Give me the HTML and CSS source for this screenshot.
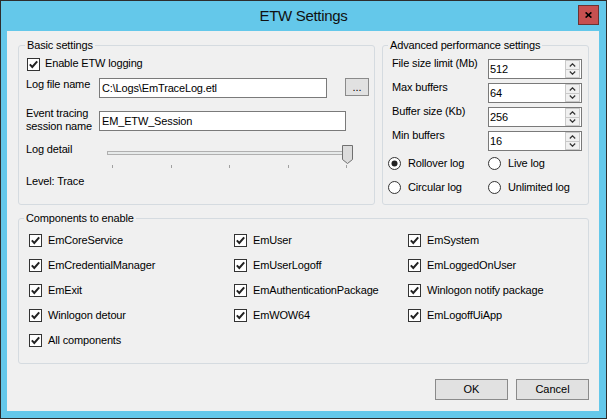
FILE: index.html
```html
<!DOCTYPE html>
<html>
<head>
<meta charset="utf-8">
<link rel="stylesheet" href="styles.css">
</head>
<body>
<svg class="defs" width="0" height="0" aria-hidden="true">
  <defs>
    <symbol id="chk" viewBox="0 0 13 13">
      <rect x="0.5" y="0.5" width="12" height="12" fill="#fff" stroke="#333"/>
      <path d="M2.8 6.4 L5.3 9 L10.2 3.4" fill="none" stroke="#222" stroke-width="2"/>
    </symbol>
    <symbol id="radio" viewBox="0 0 13 13">
      <circle cx="6.5" cy="6.5" r="6" fill="#fff" stroke="#333"/>
    </symbol>
    <symbol id="radio-on" viewBox="0 0 13 13">
      <circle cx="6.5" cy="6.5" r="6" fill="#fff" stroke="#333"/>
      <circle cx="6.5" cy="6.5" r="3" fill="#222"/>
    </symbol>
    <symbol id="up" viewBox="0 0 7 4">
      <path d="M0.8 3.5 L3.5 0.8 L6.2 3.5" fill="none" stroke="#333" stroke-width="1.2"/>
    </symbol>
    <symbol id="down" viewBox="0 0 7 4">
      <path d="M0.8 0.5 L3.5 3.2 L6.2 0.5" fill="none" stroke="#333" stroke-width="1.2"/>
    </symbol>
  </defs>
</svg>
<div class="window">
  <div class="titlebar">
    <span></span>
    <span class="title">ETW Settings</span>
    <button class="close" aria-label="Close">
      <svg width="7" height="6" viewBox="0 0 7 6"><path d="M0.6 0.4 L6.4 5.6 M6.4 0.4 L0.6 5.6" stroke="#000" stroke-width="1.6"/></svg>
    </button>
  </div>
  <div class="content">
    <div class="top-row">
      <section class="group basic">
        <span class="legend">Basic settings</span>
        <div class="check enable"><svg class="cb"><use href="#chk"/></svg><span>Enable ETW logging</span></div>
        <div class="field-row file">
          <span class="lbl">Log file name</span>
          <div class="textbox w228">C:\Logs\EmTraceLog.etl</div>
          <button class="btn-small">...</button>
        </div>
        <div class="field-row session">
          <span class="lbl">Event tracing<br>session name</span>
          <div class="textbox w247">EM_ETW_Session</div>
        </div>
        <div class="field-row detail">
          <span class="lbl">Log detail</span>
          <svg class="slider" width="258" height="26" viewBox="0 0 258 26">
            <rect x="8.5" y="8.5" width="243" height="3" fill="#e7eaea" stroke="#b0b0b0"/>
            <path d="M13.5 22 V25 M72.5 22 V25 M130.5 22 V25 M189.5 22 V25 M247.5 22 V25" stroke="#a0a0a0"/>
            <path d="M243.5 2.5 H253.5 V16.5 L248.5 20.5 L243.5 16.5 Z" fill="#dcdcdc" stroke="#707070"/>
          </svg>
        </div>
        <div class="level">Level: Trace</div>
      </section>
      <section class="group advanced">
        <span class="legend">Advanced performance settings</span>
        <div class="adv-row first"><span class="albl">File size limit (Mb)</span><div class="spin"><span class="val">512</span><span class="arrows"><span class="sb"><svg width="7" height="4"><use href="#up"/></svg></span><span class="sb"><svg width="7" height="4"><use href="#down"/></svg></span></span></div></div>
        <div class="adv-row"><span class="albl">Max buffers</span><div class="spin"><span class="val">64</span><span class="arrows"><span class="sb"><svg width="7" height="4"><use href="#up"/></svg></span><span class="sb"><svg width="7" height="4"><use href="#down"/></svg></span></span></div></div>
        <div class="adv-row"><span class="albl">Buffer size (Kb)</span><div class="spin"><span class="val">256</span><span class="arrows"><span class="sb"><svg width="7" height="4"><use href="#up"/></svg></span><span class="sb"><svg width="7" height="4"><use href="#down"/></svg></span></span></div></div>
        <div class="adv-row"><span class="albl">Min buffers</span><div class="spin"><span class="val">16</span><span class="arrows"><span class="sb"><svg width="7" height="4"><use href="#up"/></svg></span><span class="sb"><svg width="7" height="4"><use href="#down"/></svg></span></span></div></div>
        <div class="radios">
          <div class="radio"><svg class="rb"><use href="#radio-on"/></svg><span>Rollover log</span></div>
          <div class="radio"><svg class="rb"><use href="#radio"/></svg><span>Live log</span></div>
          <div class="radio"><svg class="rb"><use href="#radio"/></svg><span>Circular log</span></div>
          <div class="radio"><svg class="rb"><use href="#radio"/></svg><span>Unlimited log</span></div>
        </div>
      </section>
    </div>
    <section class="group components">
      <span class="legend">Components to enable</span>
      <div class="comp-grid">
        <div class="check"><svg class="cb"><use href="#chk"/></svg><span>EmCoreService</span></div>
        <div class="check"><svg class="cb"><use href="#chk"/></svg><span>EmUser</span></div>
        <div class="check"><svg class="cb"><use href="#chk"/></svg><span>EmSystem</span></div>
        <div class="check"><svg class="cb"><use href="#chk"/></svg><span>EmCredentialManager</span></div>
        <div class="check"><svg class="cb"><use href="#chk"/></svg><span>EmUserLogoff</span></div>
        <div class="check"><svg class="cb"><use href="#chk"/></svg><span>EmLoggedOnUser</span></div>
        <div class="check"><svg class="cb"><use href="#chk"/></svg><span>EmExit</span></div>
        <div class="check"><svg class="cb"><use href="#chk"/></svg><span>EmAuthenticationPackage</span></div>
        <div class="check"><svg class="cb"><use href="#chk"/></svg><span>Winlogon notify package</span></div>
        <div class="check"><svg class="cb"><use href="#chk"/></svg><span>Winlogon detour</span></div>
        <div class="check"><svg class="cb"><use href="#chk"/></svg><span>EmWOW64</span></div>
        <div class="check"><svg class="cb"><use href="#chk"/></svg><span>EmLogoffUiApp</span></div>
        <div class="check"><svg class="cb"><use href="#chk"/></svg><span>All components</span></div>
      </div>
    </section>
    <div class="buttons">
      <button class="btn">OK</button>
      <button class="btn">Cancel</button>
    </div>
  </div>
</div>
</body>
</html>
```

FILE: styles.css
```css
* { box-sizing: border-box; }
body {
  margin: 0;
  font-family: "Liberation Sans", Arial, sans-serif;
  font-size: 11px;
  letter-spacing: -0.15px;
  color: #000;
}
.defs { position: absolute; width: 0; height: 0; }
.window {
  width: 607px;
  height: 419px;
  border: 1px solid #2d2d2d;
  background: #64c8ea;
  padding: 0 7px 7px 6px;
  display: flex;
  flex-direction: column;
}
.titlebar {
  height: 30px;
  margin: 0 -7px 0 -6px;
  display: grid;
  grid-template-columns: 1fr auto 1fr;
  align-items: start;
  flex: none;
}
.title {
  font-size: 15px;
  line-height: 30px;
  letter-spacing: -0.3px;
  color: #111;
}
.close {
  justify-self: end;
  margin: 4px 7px 0 0;
  width: 21px;
  height: 20px;
  padding: 0;
  border: 1px solid #6a3333;
  background: #c75050;
  display: flex;
  align-items: center;
  justify-content: center;
}
.content {
  flex: 1;
  background: #f0f0f0;
  padding: 14px 10px 0 11px;
}
.top-row { display: flex; gap: 7px; }
.group {
  position: relative;
  border: 1px solid #d5dbe0;
  border-radius: 3px;
}
.legend {
  position: absolute;
  top: -7px;
  left: 5px;
  padding: 0 2px;
  background: #f0f0f0;
  line-height: 13px;
}
.basic .legend { left: 6px; }
.basic { width: 357px; height: 160px; padding-left: 7px; }
.advanced { width: 207px; height: 160px; padding-left: 9px; }

.check { display: flex; align-items: center; gap: 6px; height: 13px; line-height: 13px; }
.cb { width: 13px; height: 13px; flex: none; }
.enable { margin-top: 11px; margin-left: 1px; gap: 5px; align-items: flex-start; }
.enable .cb { margin-top: 1px; }

.field-row { display: flex; align-items: flex-start; }
.lbl { width: 73px; flex: none; line-height: 13px; }
.textbox {
  height: 20px;
  border: 1px solid #7a7a7a;
  background: #fff;
  padding: 0 2px;
  line-height: 18px;
  white-space: nowrap;
}
.w228 { width: 228px; }
.w247 { width: 247px; margin-top: 4px; }
.btn-small {
  width: 24px;
  height: 18px;
  margin-left: 18px;
  padding: 0;
  border: 1px solid #8a8a8a;
  background: #e1e1e1;
  font: inherit;
  line-height: 16px;
  text-align: center;
}
.file { margin-top: 8px; }
.session { margin-top: 9px; }
.detail { margin-top: 10px; }
.slider { display: block; flex: none; }
.level { margin-top: 6px; line-height: 13px; }

.adv-row { display: flex; height: 24px; line-height: 13px; }
.adv-row.first { margin-top: 11px; }
.albl { width: 96px; flex: none; }
.spin {
  width: 94px;
  height: 20px;
  margin-top: 2px;
  border: 1px solid #7a7a7a;
  background: #fff;
  display: flex;
}
.val { flex: 1; padding-left: 1px; line-height: 18px; }
.arrows { width: 17px; display: flex; flex-direction: column; padding: 0 1px; }
.sb {
  flex: 1;
  border: 1px solid #c9c9c9;
  background: #f0f0f0;
  display: flex;
  align-items: center;
  justify-content: center;
}
.sb + .sb { border-top: none; }
.sb svg { display: block; }

.radios {
  display: grid;
  grid-template-columns: 100px auto;
  row-gap: 11px;
  margin-top: 4px;
  margin-left: -4px;
}
.radio { display: flex; align-items: center; gap: 7px; height: 13px; line-height: 13px; }
.rb { width: 13px; height: 13px; flex: none; }

.components { height: 146px; margin-top: 13px; padding: 15px 0 0 10px; }
.comp-grid {
  display: grid;
  grid-template-columns: 205px 174px auto;
  row-gap: 12px;
}

.buttons { display: flex; justify-content: flex-end; gap: 8px; margin-top: 15px; }
.btn {
  width: 73px;
  height: 21px;
  padding: 0;
  border: 1px solid #8a8a8a;
  background: #e1e1e1;
  font: inherit;
  line-height: 19px;
  text-align: center;
  color: #000;
}
```
